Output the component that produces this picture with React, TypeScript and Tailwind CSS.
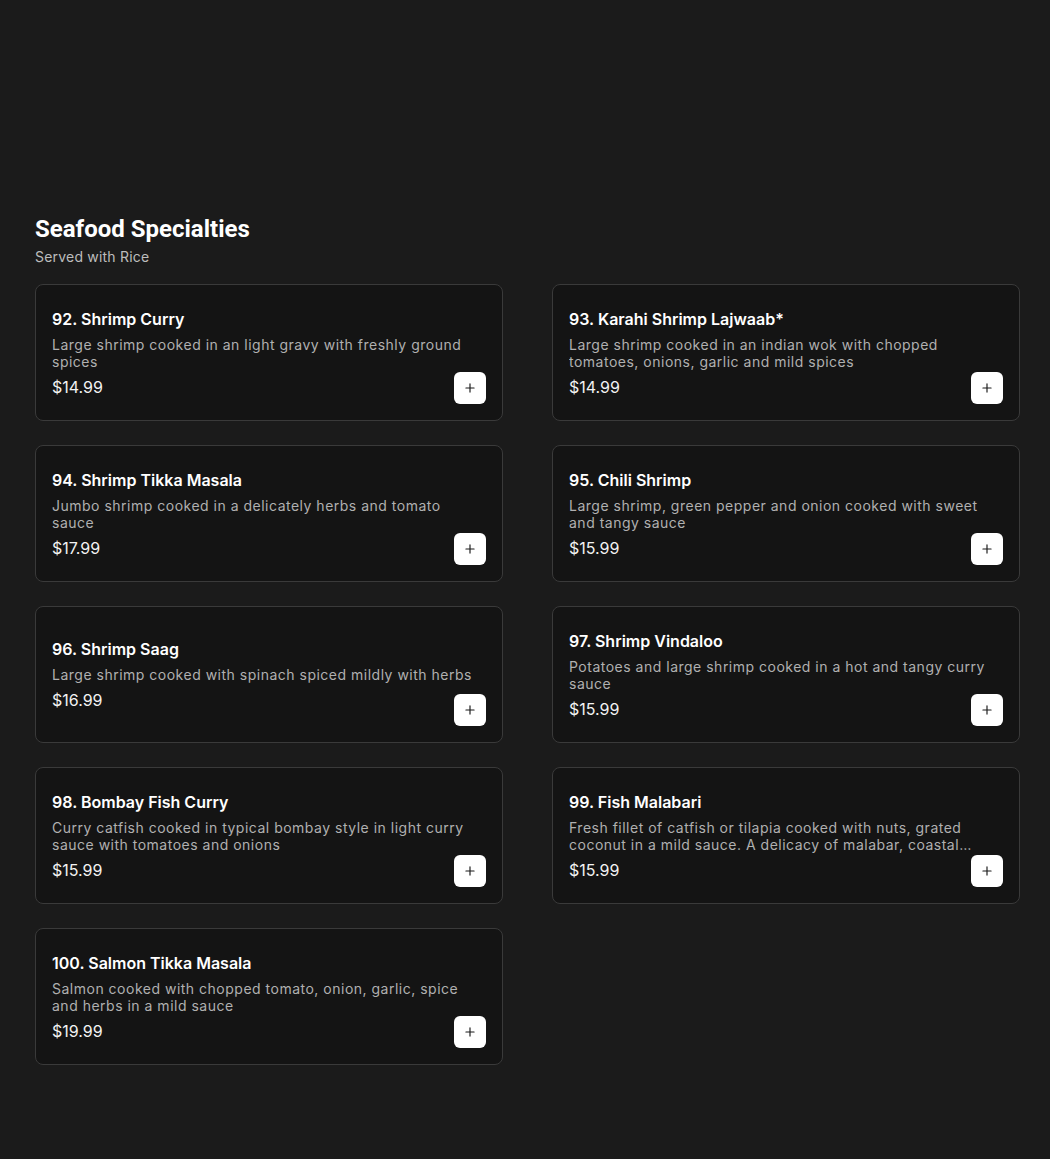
import { Plus } from 'lucide-react';

type Item = {
  name: string;
  desc: string;
  price: string;
};

const items: Item[] = [
  { name: '92. Shrimp Curry', desc: 'Large shrimp cooked in an light gravy with freshly ground spices', price: '$14.99' },
  { name: '93. Karahi Shrimp Lajwaab*', desc: 'Large shrimp cooked in an indian wok with chopped tomatoes, onions, garlic and mild spices', price: '$14.99' },
  { name: '94. Shrimp Tikka Masala', desc: 'Jumbo shrimp cooked in a delicately herbs and tomato sauce', price: '$17.99' },
  { name: '95. Chili Shrimp', desc: 'Large shrimp, green pepper and onion cooked with sweet and tangy sauce', price: '$15.99' },
  { name: '96. Shrimp Saag', desc: 'Large shrimp cooked with spinach spiced mildly with herbs', price: '$16.99' },
  { name: '97. Shrimp Vindaloo', desc: 'Potatoes and large shrimp cooked in a hot and tangy curry sauce', price: '$15.99' },
  { name: '98. Bombay Fish Curry', desc: 'Curry catfish cooked in typical bombay style in light curry sauce with tomatoes and onions', price: '$15.99' },
  { name: '99. Fish Malabari', desc: 'Fresh fillet of catfish or tilapia cooked with nuts, grated coconut in a mild sauce. A delicacy of malabar, coastal region of South India', price: '$15.99' },
  { name: '100. Salmon Tikka Masala', desc: 'Salmon cooked with chopped tomato, onion, garlic, spice and herbs in a mild sauce', price: '$19.99' },
];

function MenuCard({ item }: { item: Item }) {
  return (
    <div className="relative flex h-[137px] rounded-lg border border-[#3a3a3a] bg-[#141414] p-4">
      <div className="flex min-w-0 flex-1 flex-col justify-center pr-[10px]">
        <h3 className="text-[16px] font-semibold leading-6 text-white">{item.name}</h3>
        <p className="mt-[5px] line-clamp-2 text-[14px] leading-[17px] tracking-[0.5px] text-[#b0b0b0]">{item.desc}</p>
        <p className="mt-[5px] text-[16px] leading-6 text-[#f2f2f2]">{item.price}</p>
      </div>
      <button className="absolute bottom-4 right-4 flex h-8 w-8 items-center justify-center rounded-md bg-white text-[#1b1b1b]">
        <Plus className="h-3.5 w-3.5" strokeWidth={2} />
      </button>
    </div>
  );
}

export default function App() {
  return (
    <div
      className="min-h-[1159px] bg-[#1b1b1b] pb-24 pl-[35px] pr-[30px] pt-[213px]"
      style={{ fontFamily: 'Inter, "Open Sans", sans-serif' }}
    >
      <h2
        className="text-[24px] font-bold leading-8 text-white"
        style={{ fontFamily: 'Roboto, "Liberation Sans", sans-serif' }}
      >
        Seafood Specialties
      </h2>
      <p className="mt-0.5 text-[14px] leading-5 tracking-[0.2px] text-[#bdbdbd]">Served with Rice</p>
      <div className="mt-[17px] grid grid-cols-2 gap-x-[49px] gap-y-6">
        {items.map((item) => (
          <MenuCard key={item.name} item={item} />
        ))}
      </div>
    </div>
  );
}
